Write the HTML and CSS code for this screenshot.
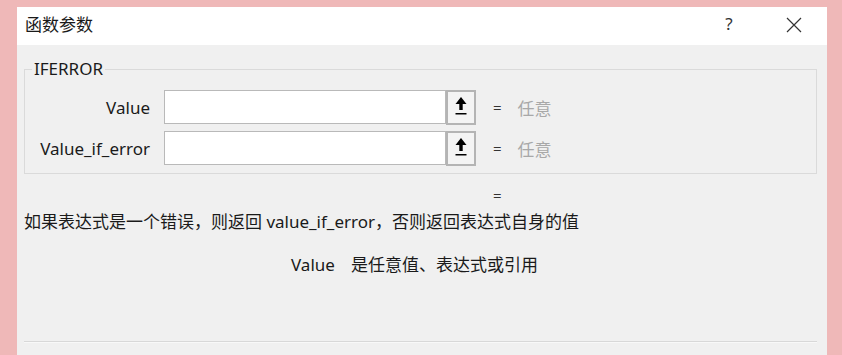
FILE: index.html
```html
<!DOCTYPE html>
<html lang="zh-CN">
<head>
    <meta charset="UTF-8">
    <title>函数参数</title>
    <link rel="stylesheet" href="styles.css">
</head>
<body>
    <div class="dialog">
        <div class="titlebar">
            <span class="title">函数参数</span>
            <span class="help">?</span>
            <span class="close">
                <svg width="16" height="16" viewBox="0 0 16 16"><path d="M1 1 L15 15 M15 1 L1 15" stroke="#333" stroke-width="1.2" fill="none"/></svg>
            </span>
        </div>

        <div class="content">
            <fieldset class="group">
                <legend>IFERROR</legend>
                <div class="row">
                    <label>Value</label>
                    <div class="field"></div>
                    <div class="pick">
                        <svg width="12" height="22" viewBox="0 0 12 22"><polygon points="6,1 11.5,8 0.5,8" fill="#000"/><rect x="4.3" y="8" width="3.4" height="6" fill="#000"/><rect x="0.5" y="17" width="11" height="1.5" fill="#000"/></svg>
                    </div>
                    <span class="eq">=</span>
                    <span class="val">任意</span>
                </div>
                <div class="row">
                    <label>Value_if_error</label>
                    <div class="field"></div>
                    <div class="pick">
                        <svg width="12" height="22" viewBox="0 0 12 22"><polygon points="6,1 11.5,8 0.5,8" fill="#000"/><rect x="4.3" y="8" width="3.4" height="6" fill="#000"/><rect x="0.5" y="17" width="11" height="1.5" fill="#000"/></svg>
                    </div>
                    <span class="eq">=</span>
                    <span class="val">任意</span>
                </div>
            </fieldset>

            <div class="result">=</div>
            <div class="desc">如果表达式是一个错误，则返回 value_if_error，否则返回表达式自身的值</div>
            <div class="arg-help"><b>Value</b><span>是任意值、表达式或引用</span></div>
            <div class="sep"></div>
        </div>
    </div>
</body>
</html>
```

FILE: styles.css
```css
body {
    margin: 0;
    padding: 7px 0 0 17px;
    background-color: #efb8b8; /* fond rose */
    font-family: "Noto Sans", "Noto Sans CJK SC", sans-serif;
    color: #1a1a1a;
    height: 348px;
    overflow: hidden;
}

.dialog {
    width: 810px;
    height: 348px;
    background-color: #f0f0f0;
}

.titlebar {
    height: 38px;
    box-sizing: border-box;
    padding: 0 0 5px 8px;
    background-color: #ffffff;
    display: flex;
    align-items: center;
}

.title {
    font-size: 17px;
    flex: 1;
}

.help {
    font-size: 17px;
    color: #333;
    width: 20px;
    text-align: center;
    margin-right: 47px;
}

.close {
    display: flex;
    margin-right: 25px;
    padding-top: 2px;
}

.content {
    padding: 0 10px 0 7px;
}

.group {
    margin: 13px 0 0 0;
    padding: 10px 0 8px 0;
    border: 1px solid #dadada;
    min-width: 0;
}

.group legend {
    margin-left: 7px;
    padding: 0 2px;
    font-size: 17px;
    line-height: 22px;
}

.row {
    display: flex;
    align-items: center;
    height: 34px;
}

.row + .row {
    margin-top: 7px;
}

.row label {
    width: 125px;
    text-align: right;
    font-size: 17px;
    margin-right: 14px;
}

.field {
    width: 280px;
    height: 32px;
    background-color: #fff;
    border: 1px solid #b9b9b9;
}

.pick {
    width: 26px;
    height: 31px;
    border: 2px solid #b4b4b4;
    background-color: #f4f4f4;
    display: flex;
    align-items: center;
    justify-content: center;
}

.eq {
    margin-left: 17px;
    font-size: 15px;
    color: #333;
}

.val {
    margin-left: 16px;
    font-size: 17px;
    color: #a8a8a8;
}

.result {
    margin-top: 11px;
    line-height: 20px;
    font-size: 15px;
    padding-left: 469px;
    color: #333;
}

.desc {
    margin-top: 6px;
    line-height: 22px;
    font-size: 17px;
}

.arg-help {
    margin-top: 21px;
    line-height: 22px;
    font-size: 17px;
    padding-left: 267px;
}

.arg-help b {
    font-weight: normal;
    margin-right: 16px;
}

.sep {
    margin-top: 65px;
    border-top: 1px solid #d8d8d8;
    border-bottom: 1px solid #f8f8f8;
}
```
